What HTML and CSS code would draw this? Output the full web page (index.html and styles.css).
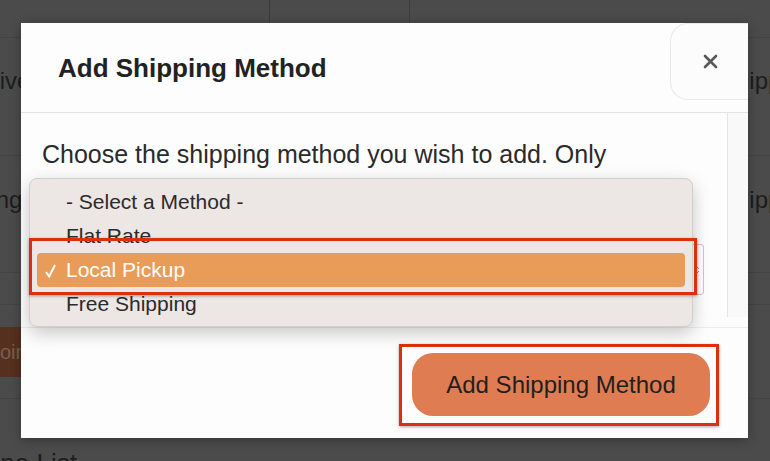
FILE: index.html
```html
<!DOCTYPE html>
<html lang="en">
<head>
    <meta charset="UTF-8">
    <title>Add Shipping Method</title>
    <link rel="stylesheet" href="styles.css">
</head>
<body>
    <div class="page">
        <div class="zones">
            <div class="zone-row head">
                <div class="cell c1"></div>
                <div class="cell c2"></div>
                <div class="cell c3"></div>
            </div>
            <div class="zone-row first">
                <div class="cell c1"><span class="left-text">Active</span></div>
                <div class="cell c2"></div>
                <div class="cell c3"><span class="right-text">Shipping</span></div>
            </div>
            <div class="zone-row second">
                <div class="cell c1"><span class="left-text shift">Shipping</span></div>
                <div class="cell c2"></div>
                <div class="cell c3"><span class="right-text">Shipping</span></div>
            </div>
            <div class="zone-row thin">
                <div class="cell c1"></div>
                <div class="cell c2"></div>
                <div class="cell c3"></div>
            </div>
            <div class="zone-row actions">
                <div class="cell c1"><button class="zone-button">Join Zone</button></div>
                <div class="cell c2"></div>
                <div class="cell c3"></div>
            </div>
        </div>
        <h2 class="list-title">Zone List</h2>

        <div class="modal">
            <div class="modal-header">
                <h1 class="modal-title">Add Shipping Method</h1>
                <button class="close-button">
                    <svg width="15" height="15" viewBox="0 0 15 15">
                        <path d="M2 2 L13 13 M13 2 L2 13" stroke="#585858" stroke-width="2.6" stroke-linecap="round"/>
                    </svg>
                </button>
            </div>
            <div class="modal-body">
                <div class="body-content">
                    <p class="intro">Choose the shipping method you wish to add. Only</p>
                    <div class="method-select">
                        <svg class="select-arrow" width="6" height="8" viewBox="0 0 6 8">
                            <path d="M1 3 L3 1 L5 3 M1 5 L3 7 L5 5" stroke="#999" stroke-width="1" fill="none"/>
                        </svg>
                    </div>
                </div>
                <div class="scroll-track"></div>
            </div>
            <div class="modal-footer">
                <div class="button-wrap">
                    <button class="add-button">Add Shipping Method</button>
                    <div class="callout callout-button"></div>
                </div>
            </div>

            <div class="dropdown">
                <div class="option">- Select a Method -</div>
                <div class="option">Flat Rate</div>
                <div class="option selected">
                    <svg class="check" width="11" height="14" viewBox="0 0 11 14">
                        <polyline points="1,8 4.2,12.5 10,1" stroke="#fff" stroke-width="2" fill="none"/>
                    </svg>
                    Local Pickup
                </div>
                <div class="option">Free Shipping</div>
                <div class="callout callout-option"></div>
            </div>
        </div>
    </div>
</body>
</html>
```

FILE: styles.css
```css
body {
    margin: 0;
    background-color: #4b4b4b;
    font-family: "Liberation Sans", Arial, sans-serif;
    color: #1d1d1d;
}

.page {
    position: relative;
    width: 770px;
    height: 461px;
    overflow: hidden;
}

/* page behind the dialog */
.zone-row {
    display: flex;
    border-bottom: 1px solid #444;
    box-sizing: border-box;
}

.zone-row.head { height: 38px; }
.zone-row.first { height: 118px; padding-top: 29px; }
.zone-row.second { height: 117px; padding-top: 30px; }
.zone-row.thin { height: 32px; }
.zone-row.actions { height: 94px; padding-top: 22px; }

.cell {
    font-size: 24px;
    line-height: 28px;
    white-space: nowrap;
}

.c1 { width: 269px; flex-shrink: 0; border-right: 1px solid #3d3d3d; }
.c2 { width: 139px; flex-shrink: 0; border-right: 1px solid #3d3d3d; }
.c3 { flex: 1; min-width: 0; }

.left-text { margin-left: -35px; }
.left-text.shift { margin-left: -71px; }
.right-text { padding-left: 310px; }

.zone-button {
    margin-left: -24px;
    height: 50px;
    padding: 0 14px;
    border: none;
    background-color: #55301f;
    color: #7d5c4f;
    font-family: inherit;
    font-size: 20px;
}

.list-title {
    margin: 49px 0 0 -30px;
    font-size: 26px;
    line-height: 30px;
    font-weight: normal;
}

/* dialog */
.modal {
    position: absolute;
    left: 21px;
    top: 23px;
    width: 727px;
    height: 415px;
    background-color: #fdfdfd;
    display: flex;
    flex-direction: column;
    overflow: hidden;
    box-shadow: 0 2px 10px rgba(0, 0, 0, 0.3);
}

.modal-header {
    height: 90px;
    flex-shrink: 0;
    box-sizing: border-box;
    border-bottom: 1px solid #e3e3e3;
    display: flex;
    align-items: center;
    padding-left: 37px;
}

.modal-title {
    margin: 0;
    font-size: 26px;
    line-height: 30px;
    font-weight: bold;
    color: #222;
}

.close-button {
    margin-left: auto;
    align-self: flex-start;
    width: 78px;
    height: 77px;
    box-sizing: border-box;
    padding: 0 0 0 1px;
    border: 1px solid #e8e8e8;
    border-right: none;
    border-radius: 18px 0 0 18px;
    background-color: #fcfcfc;
    display: flex;
    align-items: center;
    justify-content: center;
}

.modal-body {
    height: 214px;
    flex-shrink: 0;
    display: flex;
}

.body-content {
    flex: 1;
    padding: 26px 0 0 21px;
}

.intro {
    margin: 0;
    font-size: 25px;
    line-height: 30px;
    color: #2a2a2a;
    white-space: nowrap;
}

.method-select {
    position: relative;
    margin-top: 75px;
    width: 662px;
    height: 51px;
    box-sizing: border-box;
    border: 1px solid #c9c9c9;
    border-radius: 3px;
    background-color: #fff;
}

.select-arrow {
    position: absolute;
    right: 3px;
    top: 21px;
}

.scroll-track {
    width: 21px;
    height: 204px;
    box-sizing: border-box;
    border-left: 1px solid #e4e4e4;
    background-color: #f9f9f9;
}

.modal-footer {
    flex: 1;
    border-top: 1px solid #ececec;
    display: flex;
    justify-content: flex-end;
    align-items: center;
    padding: 3px 38px 0 0;
}

.button-wrap {
    position: relative;
}

.add-button {
    width: 298px;
    height: 63px;
    border: none;
    border-radius: 21px;
    background-color: #e07c52;
    color: #1f1f1f;
    font-family: inherit;
    font-size: 24px;
}

/* open select list */
.dropdown {
    position: absolute;
    left: 8px;
    top: 155px;
    width: 664px;
    height: 149px;
    box-sizing: border-box;
    padding: 6px 7px;
    border: 1px solid #d3cdcb;
    border-radius: 8px;
    background-color: #ece6e4;
    box-shadow: 0 6px 18px rgba(0, 0, 0, 0.22);
    font-size: 21px;
    color: #2b2b2b;
}

.option {
    height: 34px;
    line-height: 34px;
    padding-left: 29px;
    position: relative;
    white-space: nowrap;
}

.option.selected {
    background-color: #e99b58;
    border-radius: 4px;
    color: #fff;
}

.check {
    position: absolute;
    left: 8px;
    top: 11px;
}

/* red annotation frames */
.callout {
    position: absolute;
    box-sizing: border-box;
    border: 3px solid #dc2f0d;
    box-shadow: 0 1px 3px rgba(0, 0, 0, 0.35);
}

.callout-option {
    left: -1px;
    top: 59px;
    width: 668px;
    height: 57px;
}

.callout-button {
    left: -13px;
    top: -9px;
    width: 320px;
    height: 82px;
}
```
